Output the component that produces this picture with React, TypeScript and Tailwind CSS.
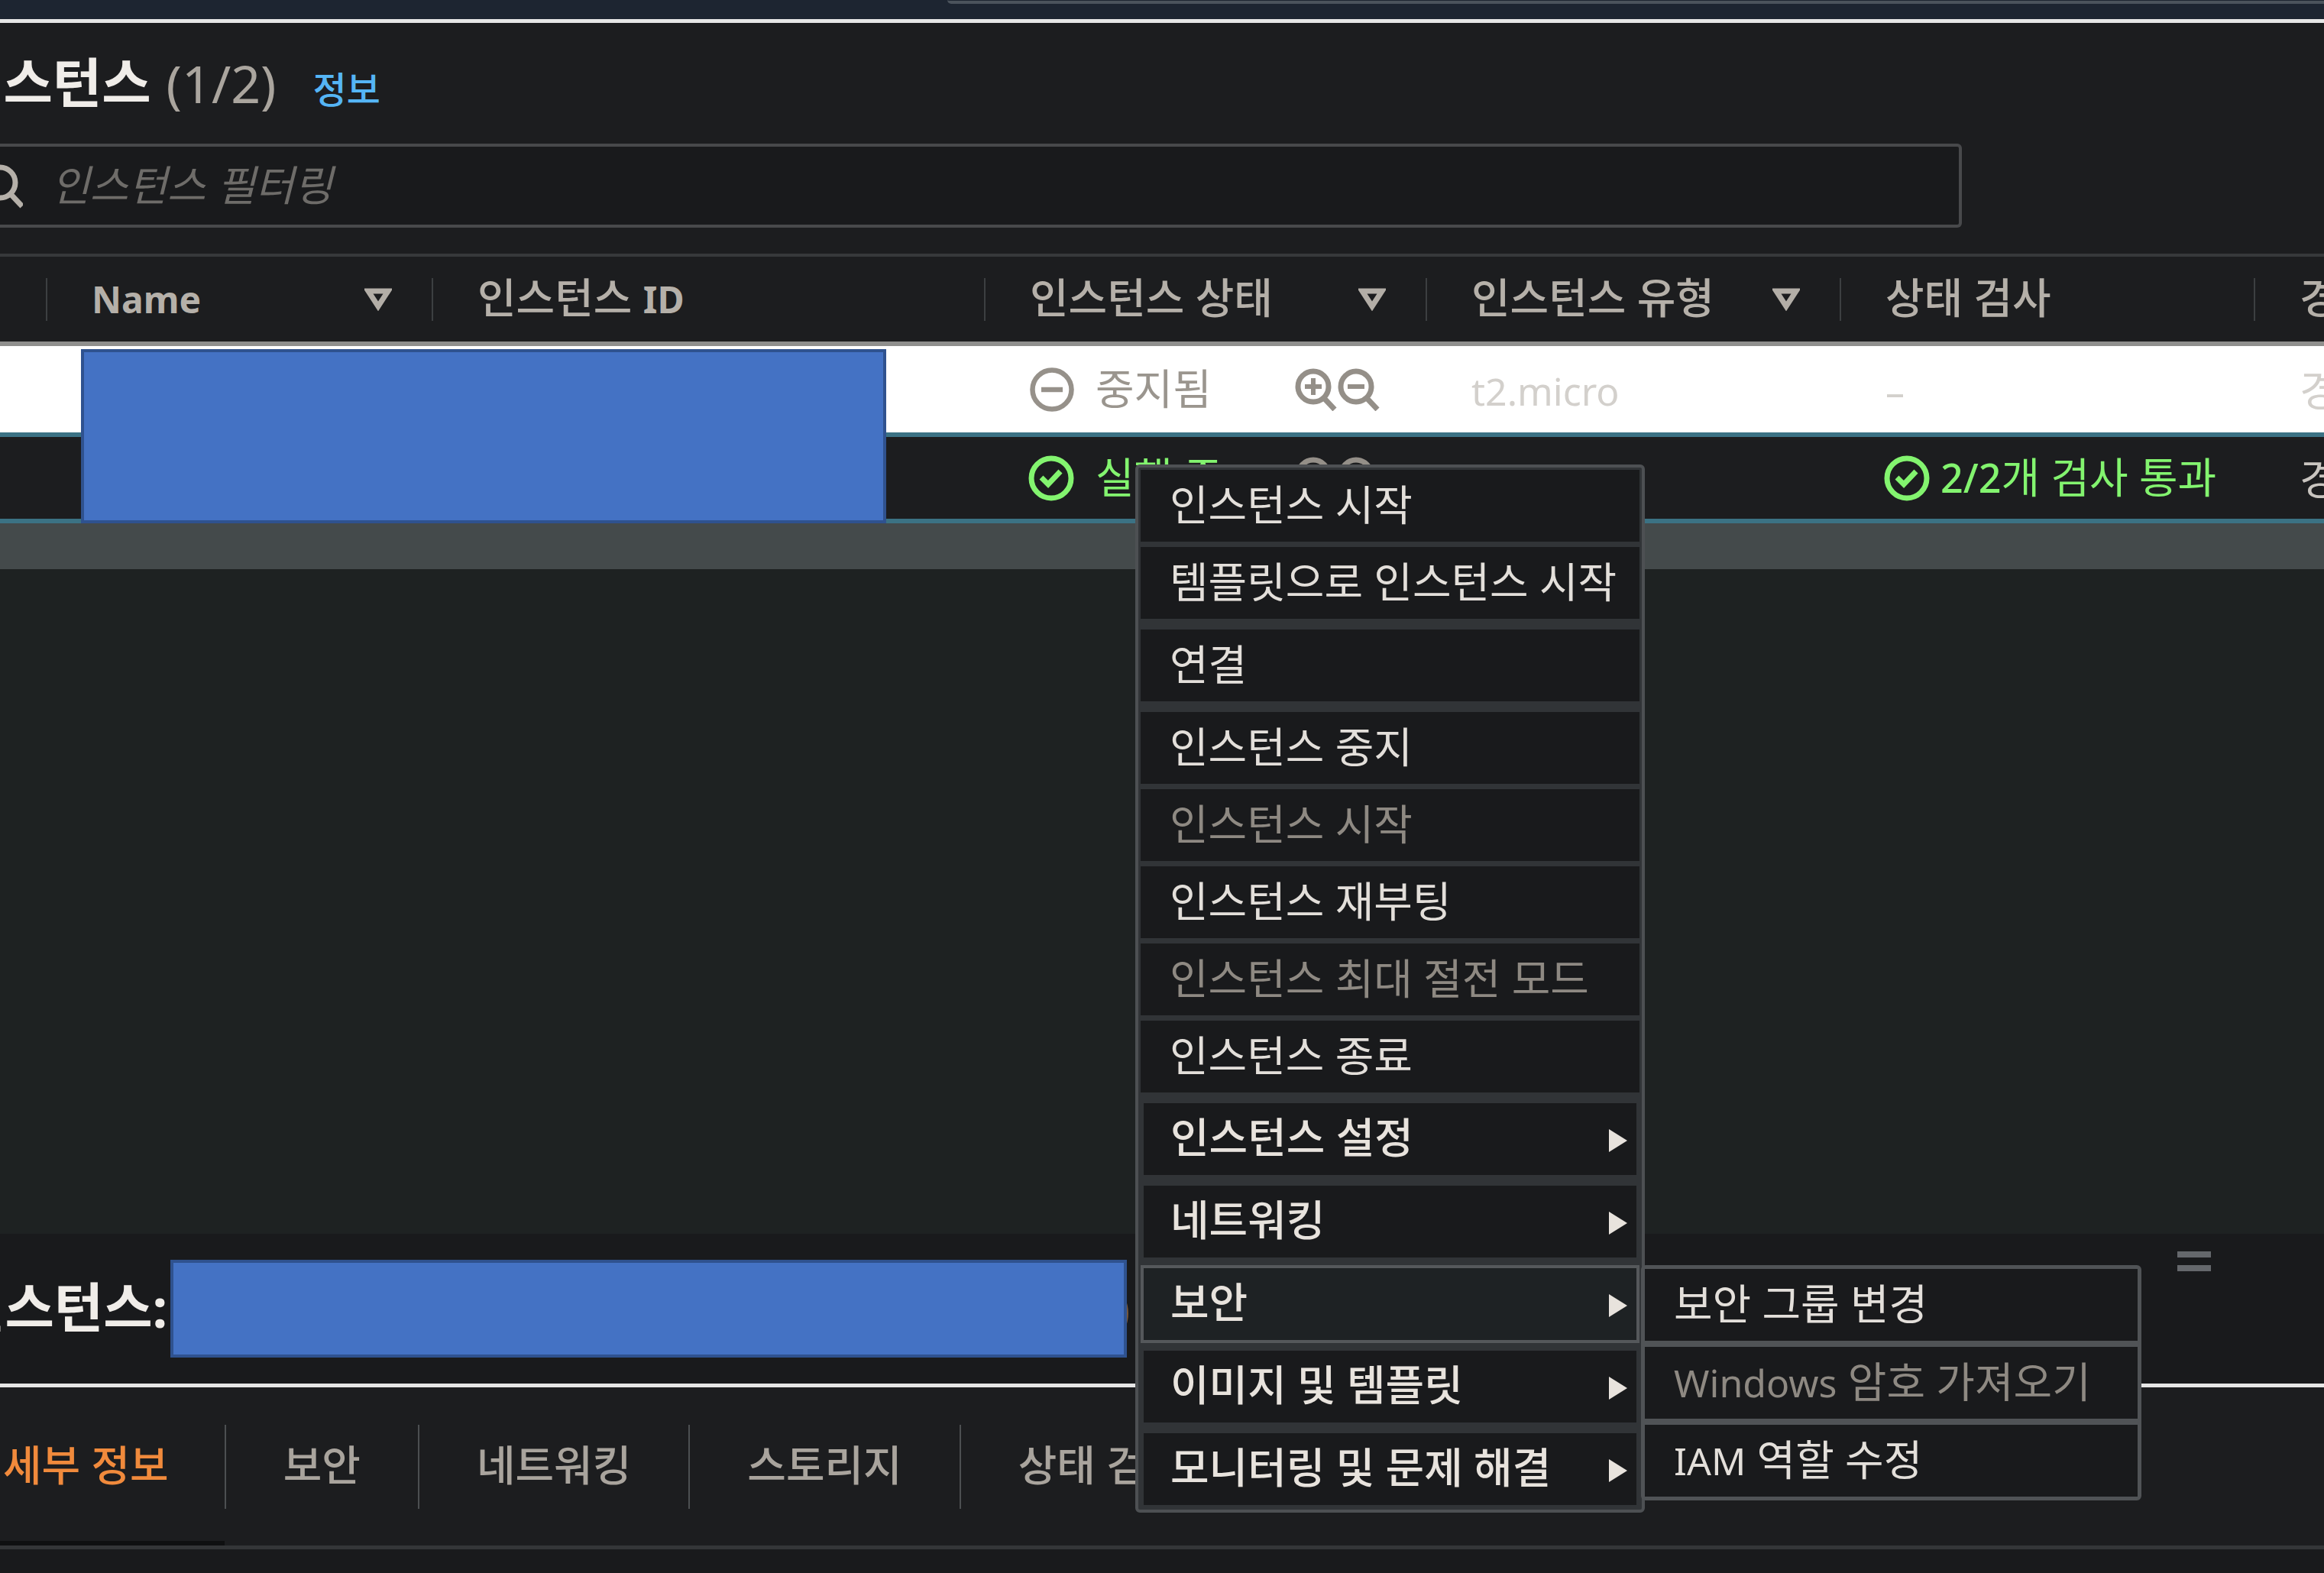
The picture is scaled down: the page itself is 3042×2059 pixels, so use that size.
import type { ReactNode } from "react";

function Latin({ children }: { children: ReactNode }) {
  return <span className="text-[50px]">{children}</span>;
}

function HeadLatin({ children }: { children: ReactNode }) {
  return <span className="text-[48px] font-bold">{children}</span>;
}

function StoppedIcon() {
  return (
    <svg viewBox="0 0 58 58" className="size-[58px] shrink-0" fill="none" stroke="#96918a" strokeWidth="6.5">
      <circle cx="29" cy="29" r="25.5" />
      <path d="M15 29h28" />
    </svg>
  );
}

function CheckIcon() {
  return (
    <svg viewBox="0 0 60 60" className="size-[60px] shrink-0" fill="none" stroke="#83f46f" strokeWidth="7">
      <circle cx="30" cy="30" r="26" />
      <path d="M17 29l9 9 16-17" />
    </svg>
  );
}

function MagnifierIcon({ plus }: { plus?: boolean }) {
  return (
    <svg viewBox="0 0 56 56" className="size-[56px] shrink-0" fill="none" stroke="#948f88" strokeWidth="7">
      <circle cx="24" cy="24" r="20" />
      <path d="M37 38l15 16" />
      <path d={plus ? "M13 24h22M24 13v22" : "M13 24h22"} strokeWidth="6" />
    </svg>
  );
}

function SortButton({ label }: { label: string }) {
  return (
    <button aria-label={label} className="flex">
      <svg viewBox="0 0 36 30" className="h-[30px] w-9" fill="none" stroke="#b3aea7" strokeWidth="7">
        <path d="M5 4h26L18 24z" />
      </svg>
    </button>
  );
}

function Head({ children, sort }: { children: ReactNode; sort?: string }) {
  return (
    <th scope="col" className="h-[116px] p-0 text-left font-medium">
      <div className="flex h-14 items-center justify-between border-l-2 border-[#3c3f41] pr-[52px] pl-[58px] whitespace-nowrap">
        <span className="pb-[6px]">{children}</span>
        {sort && <SortButton label={sort} />}
      </div>
    </th>
  );
}

function MenuItem({ children, disabled }: { children: ReactNode; disabled?: boolean }) {
  return (
    <button
      role="menuitem"
      disabled={disabled}
      className="flex h-[94px] items-center bg-[#191a1c] px-[38px] pb-[6px] whitespace-nowrap text-[#e3dfda] disabled:text-[#8e8982]"
    >
      <span>{children}</span>
    </button>
  );
}

function SubmenuTrigger({ children, open }: { children: ReactNode; open?: boolean }) {
  return (
    <button
      role="menuitem"
      aria-haspopup="menu"
      aria-expanded={!!open}
      className={
        open
          ? "mx-1 flex h-[94px] items-center justify-between bg-[#1e2224] pr-3 pb-2 pl-[35px] font-medium ring-4 ring-[#55585b]"
          : "mx-1 flex h-[94px] items-center justify-between bg-[#191a1c] pr-3 pb-2 pl-[35px] font-medium"
      }
    >
      {children}
      <svg viewBox="0 0 24 30" className="mt-3 h-[30px] w-6" fill="#e8e3dd">
        <path d="M0 0l24 15L0 30z" />
      </svg>
    </button>
  );
}

function ActionMenu() {
  return (
    <div
      role="menu"
      className="absolute top-[608px] left-[1486px] z-10 flex w-[667px] flex-col gap-[14px] rounded-md border-4 border-[#4d5053] bg-[#313437] p-[3px] pb-[6px] text-[#e8e3dd]"
    >
      <div className="flex flex-col gap-[7px]">
        <MenuItem>인스턴스 시작</MenuItem>
        <MenuItem>템플릿으로 인스턴스 시작</MenuItem>
      </div>
      <MenuItem>연결</MenuItem>
      <div className="flex flex-col gap-[7px]">
        <MenuItem>인스턴스 중지</MenuItem>
        <MenuItem disabled>인스턴스 시작</MenuItem>
        <MenuItem>인스턴스 재부팅</MenuItem>
        <MenuItem disabled>인스턴스 최대 절전 모드</MenuItem>
        <MenuItem>인스턴스 종료</MenuItem>
      </div>
      <SubmenuTrigger>인스턴스 설정</SubmenuTrigger>
      <SubmenuTrigger>네트워킹</SubmenuTrigger>
      <div className="relative flex flex-col">
        <SubmenuTrigger open>보안</SubmenuTrigger>
        <div
          role="menu"
          className="absolute -top-1 left-[655px] flex w-[655px] flex-col gap-2 rounded-md border-[5px] border-[#505356] bg-[#505356]"
        >
          <MenuItem>보안 그룹 변경</MenuItem>
          <MenuItem disabled>
            <Latin>Windows</Latin> 암호 가져오기
          </MenuItem>
          <MenuItem>
            <Latin>IAM</Latin> 역할 수정
          </MenuItem>
        </div>
      </div>
      <SubmenuTrigger>이미지 및 템플릿</SubmenuTrigger>
      <SubmenuTrigger>모니터링 및 문제 해결</SubmenuTrigger>
    </div>
  );
}

function InstanceTable() {
  return (
    <div className="relative overflow-hidden">
      <table className="w-[3400px] table-fixed border-collapse">
        <colgroup>
          <col className="w-[60px]" />
          <col className="w-[505px]" />
          <col className="w-[723px]" />
          <col className="w-[578px]" />
          <col className="w-[542px]" />
          <col className="w-[542px]" />
          <col />
        </colgroup>
        <thead className="border-t-4 border-[#37393b] text-[#b5b0a9]">
          <tr>
            <td />
            <Head sort="Name 정렬"><HeadLatin>Name</HeadLatin></Head>
            <Head>인스턴스 <HeadLatin>ID</HeadLatin></Head>
            <Head sort="인스턴스 상태 정렬">인스턴스 상태</Head>
            <Head sort="인스턴스 유형 정렬">인스턴스 유형</Head>
            <Head>상태 검사</Head>
            <Head>경보 상태</Head>
          </tr>
        </thead>
        <tbody>
          <tr className="h-[119px] border-t-[6px] border-[#8f8f8d] bg-white text-[#d3d0cc]">
            <td />
            <td />
            <td />
            <td className="p-0 pl-[60px]">
              <div className="flex items-center text-[#9a958e]">
                <StoppedIcon />
                <span className="ml-7 w-[261px] pb-1">중지됨</span>
                <MagnifierIcon plus />
                <MagnifierIcon />
              </div>
            </td>
            <td className="p-0 pl-[60px]"><Latin>t2.micro</Latin></td>
            <td className="p-0 pl-[60px]"><Latin>–</Latin></td>
            <td className="p-0 pl-[60px] whitespace-nowrap">경보 없음</td>
          </tr>
          <tr className="h-[113px] border-y-[6px] border-[#3b7284] bg-[#1c1d1f] text-[#83f46f]">
            <td />
            <td />
            <td />
            <td className="p-0 pl-[58px]">
              <div className="flex items-center">
                <CheckIcon />
                <span className="ml-7 w-[261px] pb-1">실행 중</span>
                <MagnifierIcon plus />
                <MagnifierIcon />
              </div>
            </td>
            <td />
            <td className="p-0 pl-[58px]">
              <div className="flex items-center gap-[14px] whitespace-nowrap">
                <CheckIcon />
                <span className="pb-1"><span className="text-[52px] font-medium">2/2</span>개 검사 통과</span>
              </div>
            </td>
            <td className="p-0 pl-[60px] whitespace-nowrap text-[#c9c5c0]">경보 없음</td>
          </tr>
        </tbody>
      </table>
      <div className="absolute bottom-0 left-[106px] h-[228px] w-[1054px] border-4 border-[#2f528f] bg-[#4472c4]" />
    </div>
  );
}

function Tab({ children, active }: { children: ReactNode; active?: boolean }) {
  return (
    <button
      role="tab"
      aria-selected={!!active}
      className={
        active
          ? "flex h-[207px] items-center border-b-[6px] border-[#0f1011] pt-[6px] font-medium whitespace-nowrap text-[#f08a3c]"
          : "flex h-[207px] items-center font-medium whitespace-nowrap text-[#a9a49d]"
      }
    >
      <span
        className={
          active
            ? "flex h-[110px] items-center pr-[73px] pb-[6px] pl-1"
            : "flex h-[110px] items-center border-l-2 border-[#4c4f51] px-[75px] pb-[6px]"
        }
      >
        {children}
      </span>
    </button>
  );
}

export default function App() {
  return (
    <div className="relative flex min-h-screen flex-col overflow-hidden bg-[#1c1d1f] font-['Noto_Sans','Noto_Sans_CJK_KR',sans-serif] text-[55px] leading-none">
      <header className="flex h-[25px] shrink-0 justify-end bg-[#1d2531]">
        <div className="h-[5px] w-[1802px] rounded-bl-md border-b-4 border-[#4b535c]" />
      </header>

      <main className="flex flex-1 flex-col border-t-[5px] border-[#e6e6e6]">
        <div className="-ml-[60px] flex h-[158px] items-center pb-[2px]">
          <div className="flex items-baseline">
            <h1 className="text-[70px] font-bold text-[#f0ede9]">인스턴스</h1>
            <span className="ml-5 text-[68px] text-[#aaa59e]">(1/2)</span>
            <a href="#info" className="ml-12 text-[48px] font-medium text-[#55b5f5]">정보</a>
          </div>
        </div>

        <label className="mb-[34px] flex h-[110px] w-[2568px] items-center rounded-r-md border-y-4 border-r-4 border-[#48494b] bg-[#191a1c]">
          <svg viewBox="0 0 60 60" className="-ml-[30px] size-[60px] shrink-0" fill="none" stroke="#b5b0a9" strokeWidth="7">
            <circle cx="30" cy="26" r="20" />
            <path d="M43 40l16 17" />
          </svg>
          <input
            type="text"
            aria-label="인스턴스 필터링"
            placeholder="인스턴스 필터링"
            className="ml-[37px] h-full flex-1 bg-transparent pb-1 italic outline-none placeholder:text-[#6e6c69]"
          />
        </label>

        <InstanceTable />
        <div className="h-[60px] shrink-0 bg-[#444a4b]" />
        <div className="flex-1 bg-[#1e2222]" />

        <section className="flex flex-col">
          <div className="relative flex h-[196px] items-center bg-[#191a1c]">
            <h2 className="-ml-[58px] pb-1 text-[70px] font-bold whitespace-nowrap text-[#f0ede9]">인스턴스:</h2>
            <div className="z-[1] ml-1 h-[128px] w-[1252px] border-4 border-[#2f528f] bg-[#4472c4]" />
            <span className="-ml-[15px] text-[64px] text-[#7b5a3c]">)</span>
            <button aria-label="패널 크기 조정" className="absolute top-[23px] right-[148px] flex h-[26px] w-11 flex-col justify-between">
              <span className="h-2 w-full bg-[#65686c]" />
              <span className="h-2 w-full bg-[#65686c]" />
            </button>
          </div>
          <div role="tablist" className="flex border-t-[5px] border-[#e6e6e6]">
            <Tab active>세부 정보</Tab>
            <Tab>보안</Tab>
            <Tab>네트워킹</Tab>
            <Tab>스토리지</Tab>
            <Tab>상태 검사</Tab>
          </div>
          <div className="h-9 border-t-[5px] border-[#343638] bg-[#191a1c]" />
        </section>
      </main>

      <ActionMenu />
    </div>
  );
}
